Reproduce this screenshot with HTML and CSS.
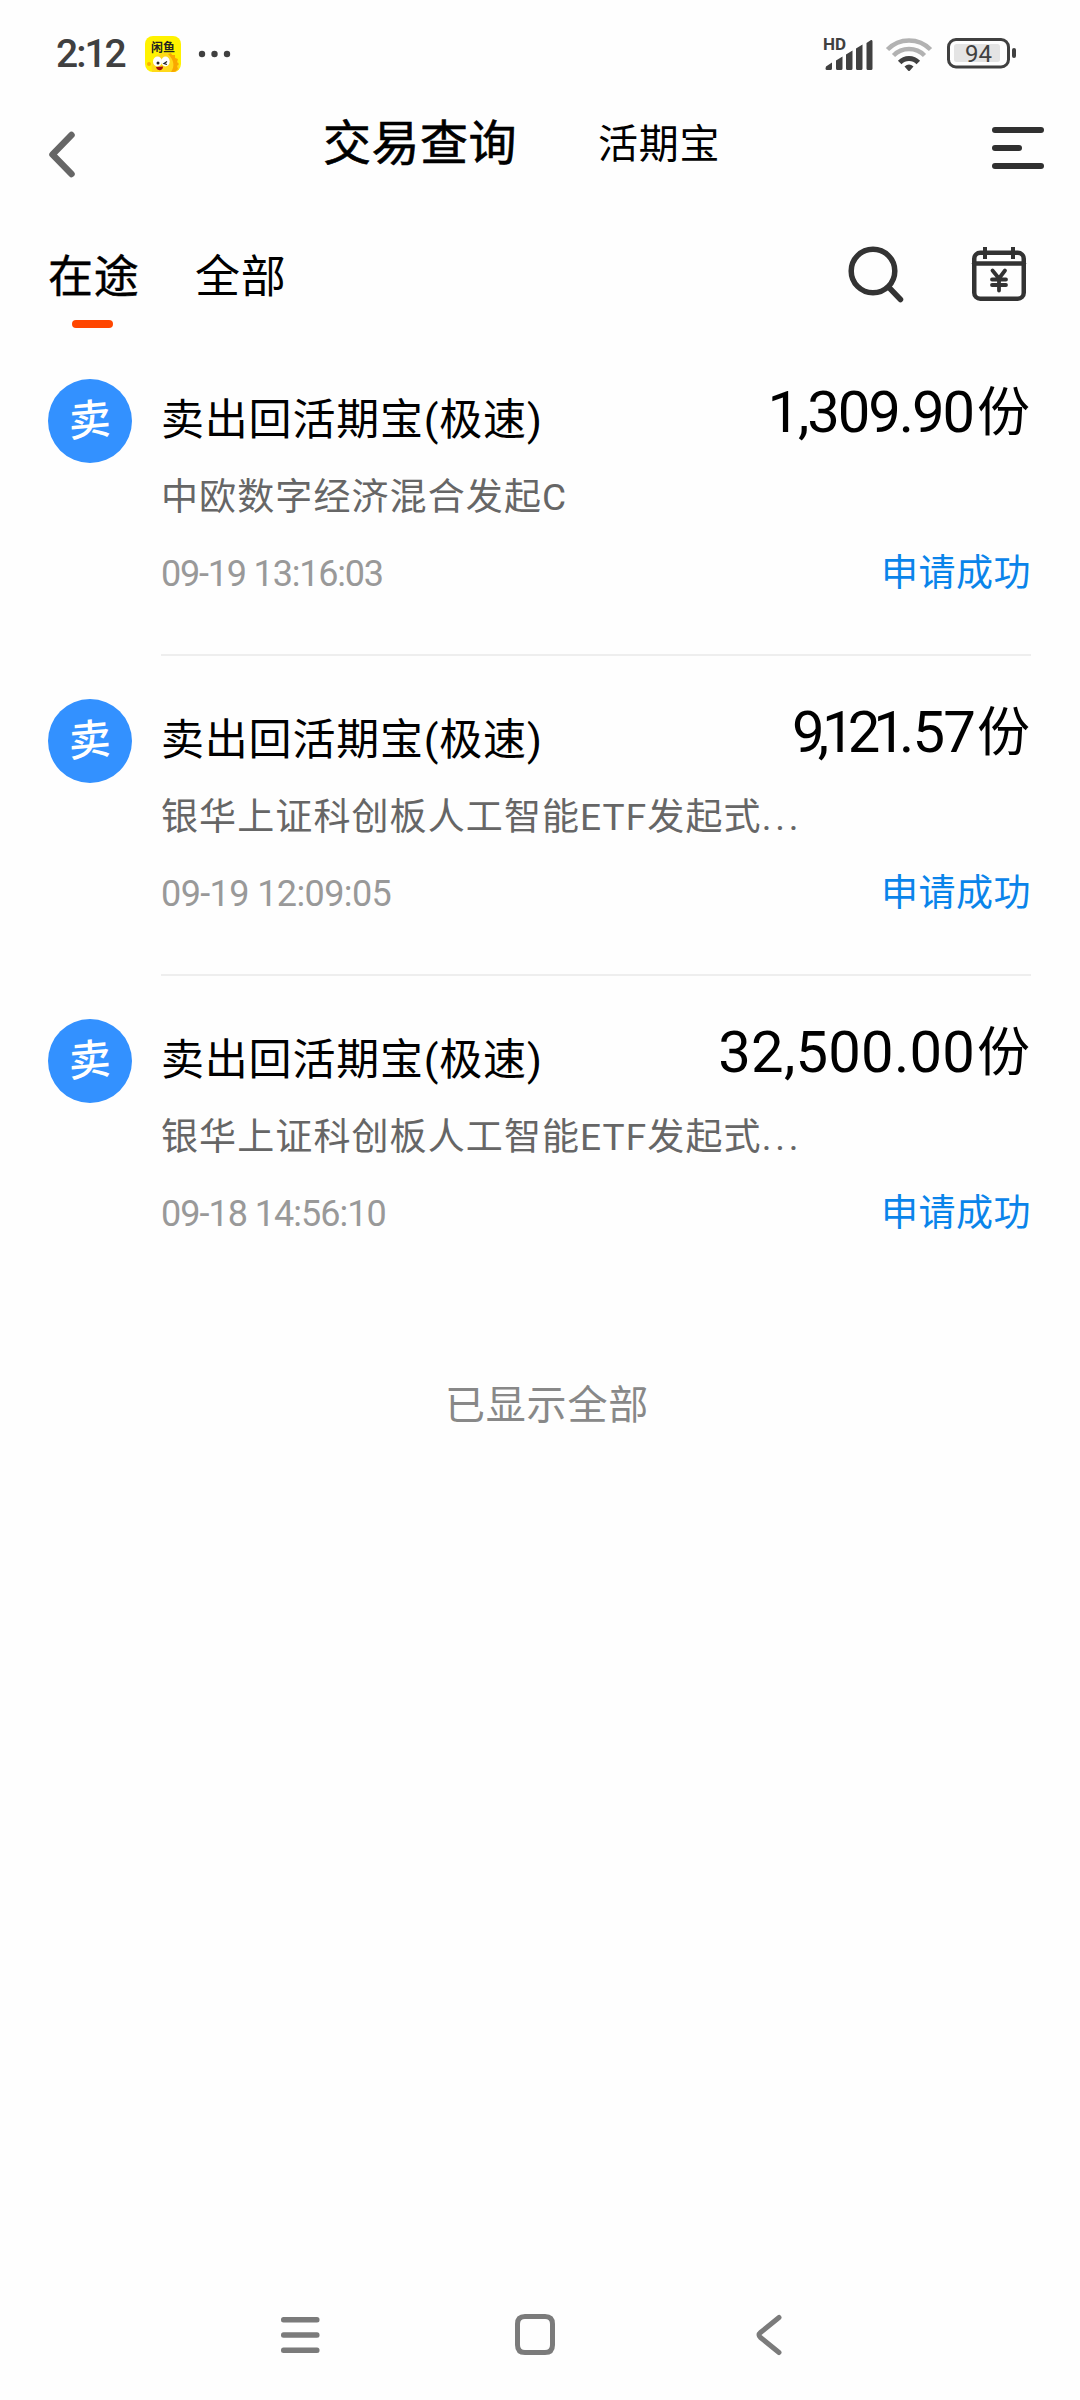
FILE: index.html
```html
<!DOCTYPE html>
<html lang="zh-CN">
<head>
<meta charset="utf-8">
<title>交易查询</title>
<link rel="stylesheet" href="styles.css">
</head>
<body>
<div class="screen">
  <div class="status-bar">
    <span class="clock">2:12</span>
    <svg class="app-badge" width="36" height="36" viewBox="0 0 36 36">
      <defs><clipPath id="badge"><rect width="36" height="36" rx="8"/></clipPath></defs>
      <g clip-path="url(#badge)">
        <rect width="36" height="36" fill="#fff200"/>
        <path d="M7 36C5 25 10 17 20 17c10 0 16 8 14 19z" fill="#ffd91a"/>
        <path d="M23 18l3-1 1 2 3 0 0 3 3 1-1 3 2 2-2 2 1 3-3 3h-4c4-6 3-12-3-18z" fill="#f9a800"/>
        <circle cx="4" cy="28" r="2" fill="#f9b000"/>
        <ellipse cx="12.500" cy="25.500" rx="4.500" ry="5" fill="#fff"/>
        <ellipse cx="20.500" cy="25.500" rx="4.200" ry="5" fill="#fff"/>
        <circle cx="13" cy="27" r="1.500" fill="#222"/>
        <path d="M22 25.500l-3 2 3 1" fill="none" stroke="#222" stroke-width="1.300"/>
        <path d="M11 31l7-.5c0 5-6 5-7 .5z" fill="#a80f0a"/>
      </g>
      <text class="badge-text" x="6" y="15.500">闲鱼</text>
    </svg>
    <svg class="dots" width="32" height="8" viewBox="0 0 32 8" fill="#404040"><circle cx="4" cy="4" r="3.200"/><circle cx="16.500" cy="4" r="3.200"/><circle cx="29" cy="4" r="3.200"/></svg>
    <div class="status-right">
      <svg width="52" height="36" viewBox="0 0 52 36" fill="#404040">
        <text class="hd" x="0" y="14">HD</text>
        <path d="M3 30.500l6-4v6q0 1.500-1.500 1.500H4q-1.500 0-1.500-1.500zM13 24.500l6.500-4v12q0 1.500-1.500 1.500h-3.500q-1.500 0-1.500-1.500zM23 18.500l6.500-4v18q0 1.500-1.500 1.500h-3.500q-1.500 0-1.500-1.500zM33 12.500l6.500-4v24q0 1.500-1.500 1.500h-3.500q-1.500 0-1.500-1.500zM43.500 7l4.500-3q1.500-.5 1.500 1.500v27q0 1.500-1.500 1.500h-3q-1.500 0-1.500-1.500z"/>
      </svg>
      <svg class="wifi" width="48" height="36" viewBox="0 0 48 36" fill="none" stroke-width="4.500">
        <path d="M2.500 13.500a30 30 0 0 1 43 0" stroke="#b2b2b2"/>
        <path d="M8.500 19.500a22 22 0 0 1 31 0" stroke="#b2b2b2"/>
        <path d="M14.700 26.500a13 13 0 0 1 18.600 0" stroke="#404040" stroke-width="5"/>
        <path d="M19.500 30.500q4.500-4 9 0L25 34.500q-1 1-2 0z" fill="#404040"/>
      </svg>
      <svg class="battery" width="70" height="32" viewBox="0 0 70 32">
        <rect x="1.500" y="1.500" width="60" height="27.500" rx="7.500" fill="none" stroke="#404040" stroke-width="3"/>
        <rect x="7" y="6" width="46" height="18" rx="2.500" fill="#e4e4e4"/>
        <rect x="65" y="10" width="4" height="10" rx="2" fill="#404040"/>
        <text class="battery-text" x="31.500" y="24" text-anchor="middle">94</text>
      </svg>
    </div>
  </div>

  <header class="nav">
    <svg class="back" width="28" height="48" viewBox="0 0 28 48" fill="none" stroke="#666" stroke-width="6.500" stroke-linecap="round" stroke-linejoin="round"><path d="M24.500 5L5.500 24.500l19 19.500"/></svg>
    <h1 class="nav-title">交易查询</h1>
    <span class="nav-sub">活期宝</span>
    <svg class="menu" width="52" height="42" viewBox="0 0 52 42" fill="#303030"><rect width="52" height="6" rx="3"/><rect y="18" width="30" height="6" rx="3"/><rect y="36" width="52" height="6" rx="3"/></svg>
  </header>

  <div class="tabs">
    <span class="tab active">在途</span>
    <span class="tab">全部</span>
    <svg class="search" width="56" height="56" viewBox="0 0 56 56" fill="none" stroke="#333" stroke-width="5.500" stroke-linecap="round"><circle cx="25" cy="25" r="21.800"/><path d="M41 41.500l11.500 12"/></svg>
    <svg class="calendar" width="54" height="54" viewBox="0 0 54 54" fill="none" stroke="#333" stroke-width="4.500" stroke-linecap="round">
      <rect x="2.250" y="5.750" width="49.500" height="46" rx="6"/><path d="M2 16.500h50"/><path d="M13 2v8M41 2v8" stroke-linecap="square" stroke-width="4"/><path d="M20.500 23.500l6.500 8 6-8M27 31.500v12M20 32.500h14M20 38h14" stroke-width="3.800"/>
    </svg>
  </div>

  <main class="list">
    <article class="record">
      <div class="sell"><span class="sell-mark">卖</span></div>
      <div class="body">
        <div class="title">卖出回活期宝(极速)</div>
        <div class="fund">中欧数字经济混合发起C</div>
        <div class="date d1">09-19 13:16:03</div>
      </div>
      <div class="side"><div class="amount"><span class="num n1">1,309.90</span>份</div><div class="state">申请成功</div></div>
    </article>
    <article class="record">
      <div class="sell"><span class="sell-mark">卖</span></div>
      <div class="body">
        <div class="title">卖出回活期宝(极速)</div>
        <div class="fund">银华上证科创板人工智能ETF发起式<span class="more">...</span></div>
        <div class="date d2">09-19 12:09:05</div>
      </div>
      <div class="side"><div class="amount"><span class="num n2"><span class="tight">9,121</span>.57</span>份</div><div class="state">申请成功</div></div>
    </article>
    <article class="record">
      <div class="sell"><span class="sell-mark">卖</span></div>
      <div class="body">
        <div class="title">卖出回活期宝(极速)</div>
        <div class="fund">银华上证科创板人工智能ETF发起式<span class="more">...</span></div>
        <div class="date d3">09-18 14:56:10</div>
      </div>
      <div class="side"><div class="amount"><span class="num n3">32,500.00</span>份</div><div class="state">申请成功</div></div>
    </article>
  </main>
  <p class="end">已显示全部</p>

  <footer class="system-nav">
    <svg width="40" height="42" viewBox="0 0 40 42" fill="#7b7b7b"><rect x="1" y="3" width="38.500" height="5.500" rx="2.500"/><rect x="1" y="18.200" width="38.500" height="5.500" rx="2.500"/><rect x="1" y="33.500" width="38.500" height="5.500" rx="2.500"/></svg>
    <svg class="home" width="42" height="42" viewBox="0 0 42 42" fill="none" stroke="#7b7b7b" stroke-width="5"><path d="M11 2.500H31Q38.500 2.500 38.500 10V31Q38.500 38.500 31 38.500H11Q3.500 38.500 3.500 31V10Q3.500 2.500 11 2.500Z"/></svg>
    <svg width="26" height="42" viewBox="0 0 26 42" fill="none" stroke="#7b7b7b" stroke-width="5" stroke-linecap="round"><path d="M23 3.500L4.500 18.500q-3 2.500 0 5L23 38.500"/></svg>
  </footer>
</div>
</body>
</html>
```
FILE: styles.css
```css
* { box-sizing: border-box; }
body { margin: 0; background: #fefefe; font-family: Roboto, "Noto Sans CJK SC", sans-serif; color: #000; }
svg { display: block; flex: none; overflow: visible; }
.screen { width: 1080px; height: 2400px; display: flex; flex-direction: column; white-space: nowrap; }

.status-bar { height: 108px; padding-left: 56px; display: flex; align-items: center; color: #404040; }
.clock { width: 89px; font-size: 39px; font-weight: 500; line-height: 46px; letter-spacing: -2px; }
.dots { margin-left: 17px; }
.badge-text { font: 700 12px "Noto Sans CJK SC", sans-serif; fill: #222; }
.status-right { margin-left: auto; padding-right: 63px; display: flex; align-items: center; }
.hd { font: 700 17px Roboto, sans-serif; }
.wifi { margin-left: 10px; }
.battery { margin-left: 14px; }
.battery-text { font: 400 24px Roboto, sans-serif; fill: #404040; }

.nav { height: 102px; padding: 0 36px 0 47px; display: flex; align-items: flex-start; }
.back { margin-top: 22px; }
.nav-title { margin: 1px 0 0 248px; width: 275px; font-size: 48px; font-weight: 400; -webkit-text-stroke: .6px #000; line-height: 70px; letter-spacing: .5px; }
.nav-sub { margin-top: 2px; font-size: 40px; line-height: 70px; letter-spacing: .8px; }
.menu { margin: 19px 0 0 auto; }

.tabs { height: 126px; padding: 0 54px 0 48px; display: flex; align-items: flex-start; }
.tab { width: 147px; height: 118px; font-size: 45px; line-height: 136px; letter-spacing: .8px; }
.active { -webkit-text-stroke: .4px #000; }
.active::after { content: ""; display: block; width: 41px; height: 8px; margin: -26px 0 0 24px; border-radius: 4px; background: #ff4600; }
.search { margin: 36px 0 0 auto; }
.calendar { margin: 37px 0 0 68px; }

.record { height: 320px; padding-left: 48px; display: flex; }
.sell { width: 84px; height: 84px; margin-top: 43px; border-radius: 50%; background: #3391ff; color: #fff; display: flex; align-items: center; justify-content: center; }
.sell-mark { font-size: 42px; font-weight: 500; line-height: 84px; transform: rotate(-5deg) skewX(-4deg); }
.body { width: 640px; margin-left: 29px; border-bottom: 2px solid #eee; }
.title { margin-top: 56px; font-size: 43px; line-height: 56px; letter-spacing: .8px; }
.fund { margin-top: 24px; font-size: 37px; line-height: 52px; letter-spacing: 1.1px; color: #666; }
.more { letter-spacing: 3.8px; }
.date { margin-top: 28px; font-size: 36px; line-height: 44px; color: #999; }
.d1 { letter-spacing: -1.2px; }
.d2 { letter-spacing: -.6px; }
.d3 { letter-spacing: -1px; }
.side { flex: none; width: 230px; border-bottom: 2px solid #eee; text-align: right; display: flex; flex-direction: column; align-items: flex-end; }
.record:last-child .body, .record:last-child .side { border-color: transparent; }
.amount { height: 70px; margin: 41px 1px 0 0; font-size: 53px; line-height: 70px; }
.num { font-size: 58px; vertical-align: -1px; }
.n1 { letter-spacing: -2.1px; margin-right: 4px; }
.n2 { letter-spacing: -1.8px; margin-right: 3px; }
.tight { letter-spacing: -7px; }
.n3 { letter-spacing: .2px; margin-right: 2px; }
.state { margin-top: 101px; font-size: 37px; line-height: 52px; letter-spacing: .5px; color: #0a84ea; }
.end { margin: 80px 0 0 445px; font-size: 40px; line-height: 60px; letter-spacing: .8px; color: #888; }
.system-nav { margin-top: auto; height: 131px; padding: 0 298px 0 280px; display: flex; align-items: center; justify-content: space-between; }
.home { margin-right: 7px; }
```
